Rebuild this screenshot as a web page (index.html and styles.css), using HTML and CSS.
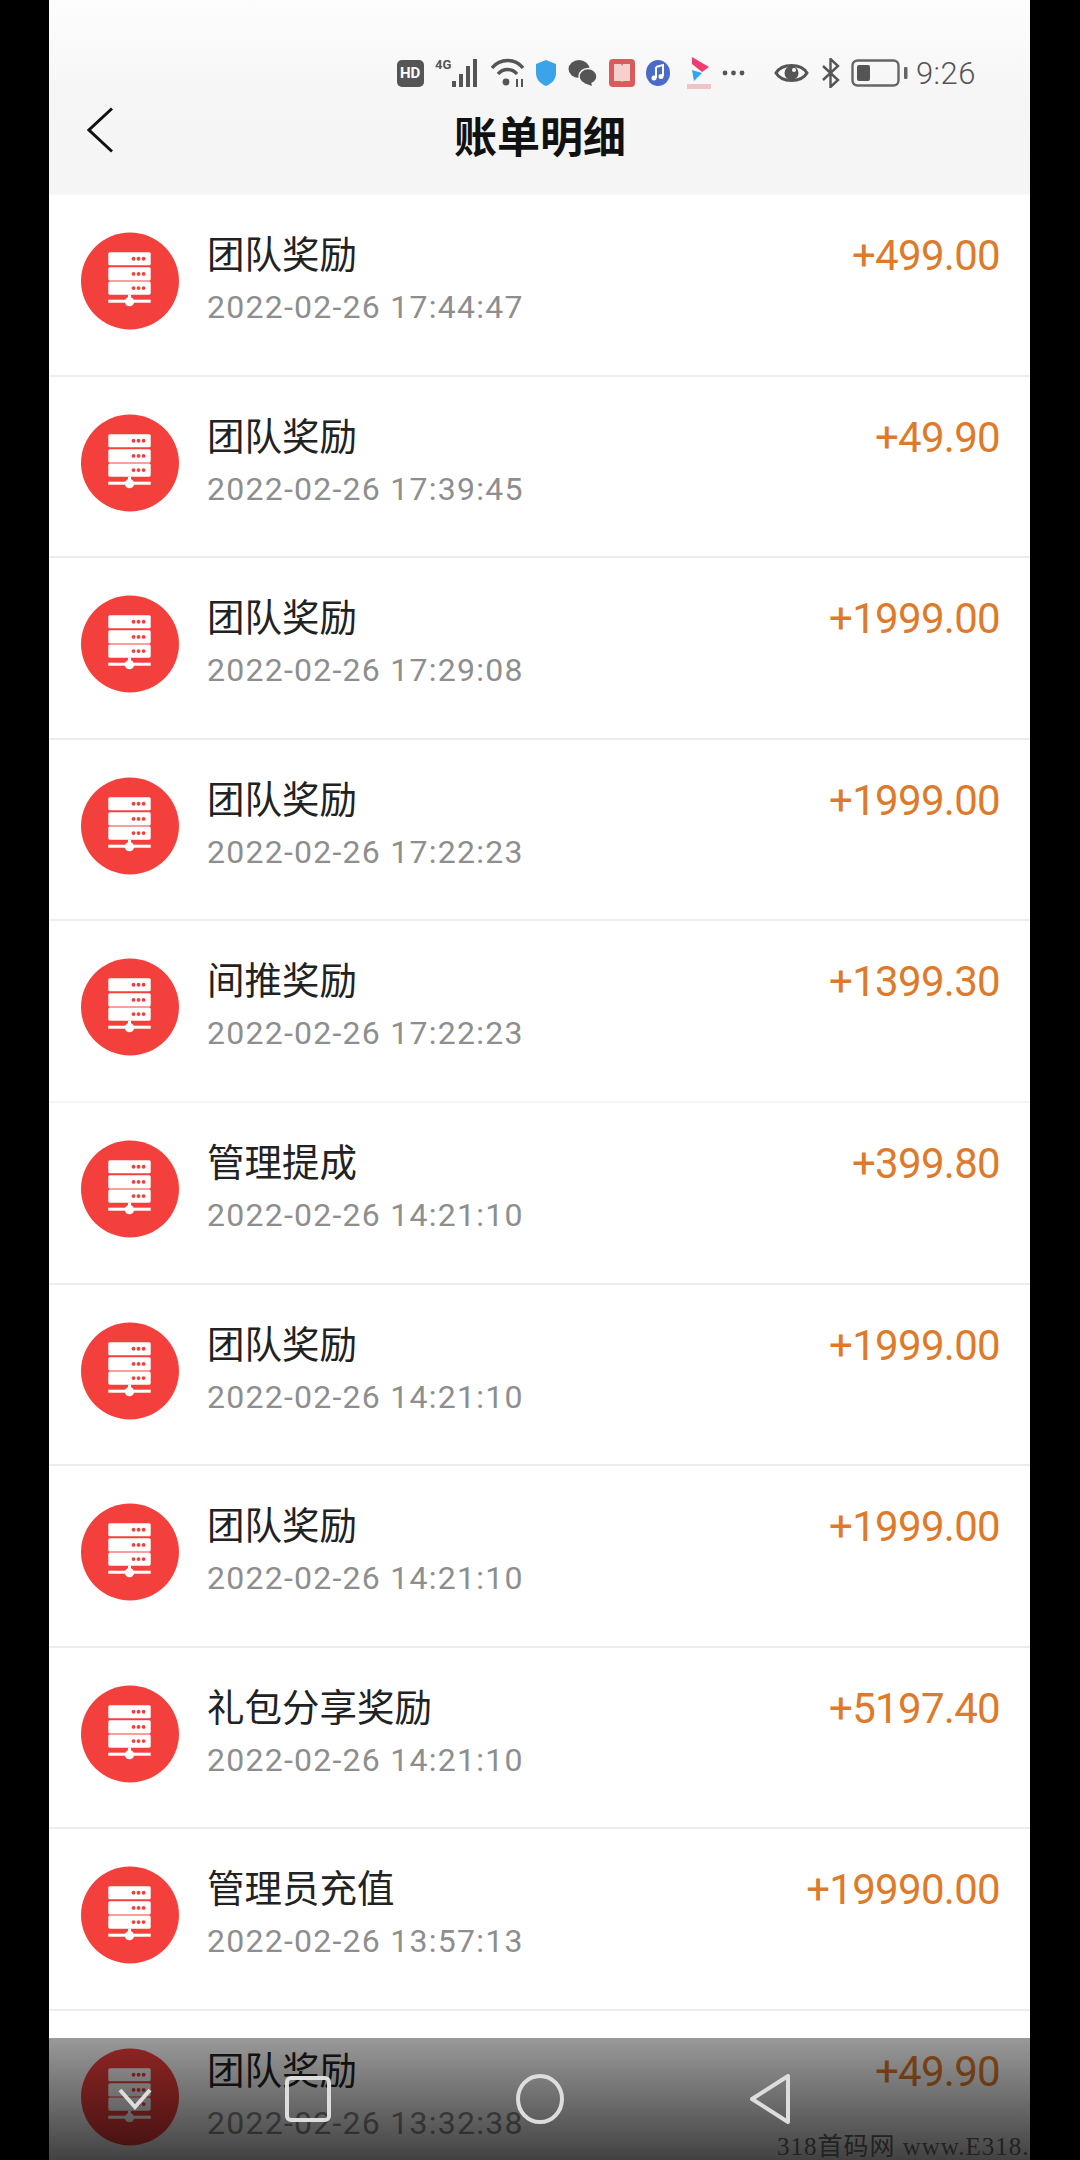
FILE: index.html
```html
<!DOCTYPE html>
<html lang="zh-CN">
<head>
    <meta charset="UTF-8">
    <meta name="viewport" content="width=device-width, initial-scale=1.0">
    <title>账单明细</title>
    <link rel="stylesheet" href="styles.css">
</head>
<body>
    <svg class="defs" width="0" height="0">
        <symbol id="server" viewBox="0 0 97 97">
            <ellipse cx="48.5" cy="48.5" rx="48.5" ry="48" fill="#f3403c"/>
            <rect x="27" y="20" width="42" height="13" rx="1.5" fill="#fff"/>
            <rect x="27" y="35" width="42" height="13" rx="1.5" fill="#fff"/>
            <rect x="27" y="49" width="42" height="13" rx="1.5" fill="#fff"/>
            <g fill="#f3403c">
                <circle cx="52" cy="26.5" r="1.9"/><circle cx="57" cy="26.5" r="1.9"/><circle cx="62" cy="26.5" r="1.9"/>
                <circle cx="52" cy="41.5" r="1.9"/><circle cx="57" cy="41.5" r="1.9"/><circle cx="62" cy="41.5" r="1.9"/>
                <circle cx="52" cy="55.5" r="1.9"/><circle cx="57" cy="55.5" r="1.9"/><circle cx="62" cy="55.5" r="1.9"/>
            </g>
            <rect x="46.5" y="62" width="3" height="6" fill="#fff"/>
            <rect x="27" y="67" width="42" height="3" fill="#fff"/>
            <circle cx="48" cy="69" r="4.6" fill="#fff"/>
        </symbol>
    </svg>

    <div class="screen">
        <header>
            <div class="status">
                <span class="hd">HD</span>
                <svg width="45" height="30" viewBox="0 0 45 30">
                    <text x="0" y="11" font-size="13" font-weight="700" fill="#555" font-family="Roboto">4G</text>
                    <g fill="#555">
                        <rect x="17" y="23" width="4" height="6"/>
                        <rect x="24" y="16" width="4" height="13"/>
                        <rect x="31" y="8" width="4" height="21"/>
                        <rect x="38" y="1" width="4" height="28"/>
                    </g>
                </svg>
                <svg width="33" height="30" viewBox="0 0 33 30" fill="none" stroke="#555" stroke-width="3.4">
                    <path d="M1 10 C9 0 24 0 32 10"/>
                    <path d="M7 16 C12 10 21 10 26 16"/>
                    <circle cx="15" cy="24" r="3.4" fill="#555" stroke="none"/>
                    <path d="M26 21v8M31 21v8" stroke-width="2"/>
                </svg>
                <svg width="22" height="28" viewBox="0 0 22 28">
                    <path d="M11 1 L21 5 V14 C21 21 16 25 11 27 C6 25 1 21 1 14 V5 Z" fill="#3aa3ea"/>
                </svg>
                <svg width="29" height="28" viewBox="0 0 29 28" fill="#555">
                    <ellipse cx="11" cy="10" rx="10.5" ry="9"/>
                    <ellipse cx="20" cy="17.5" rx="9" ry="8" stroke="#f7f7f7" stroke-width="1.5"/>
                    <path d="M16 24l7-1 1 4z"/>
                </svg>
                <svg width="26" height="28" viewBox="0 0 26 28">
                    <rect width="26" height="28" rx="4" fill="#dd5a5c"/>
                    <path d="M5 5h7l1 2 1-2h7v17h-7l-1 1-1-1h-7z" fill="#f5d0ce"/>
                </svg>
                <svg width="24" height="26" viewBox="0 0 24 26">
                    <ellipse cx="12" cy="13" rx="12" ry="13" fill="#4a6cc8"/>
                    <path d="M10 7l7-2v11M10 7v11" stroke="#fff" stroke-width="2" fill="none"/>
                    <circle cx="8" cy="18" r="2.5" fill="#fff"/><circle cx="15" cy="16.5" r="2.5" fill="#fff"/>
                </svg>
                <svg class="st-app" width="24" height="34" viewBox="0 0 24 34">
                    <path d="M5 1 L22 11 L15 16 L5 8 Z" fill="#ef3d6e"/>
                    <path d="M5 14 L15 17 L7 25 Z" fill="#2fa6ee"/>
                    <rect x="0" y="28" width="24" height="5" fill="#efc4c6"/>
                </svg>
                <svg width="23" height="6" viewBox="0 0 23 6" fill="#555">
                    <circle cx="3" cy="3" r="2.4"/><circle cx="11.5" cy="3" r="2.4"/><circle cx="20" cy="3" r="2.4"/>
                </svg>
                <svg class="st-eye" width="35" height="24" viewBox="0 0 35 24">
                    <path d="M2 12 C8 2 27 2 33 12 C27 22 8 22 2 12 Z" fill="none" stroke="#555" stroke-width="3"/>
                    <circle cx="17.5" cy="12" r="7" fill="#555"/>
                    <circle cx="20" cy="9" r="2" fill="#f7f7f7"/>
                </svg>
                <svg width="19" height="30" viewBox="0 0 19 30" fill="none" stroke="#555" stroke-width="2.4">
                    <path d="M2 8 L17 22 L9.5 29 V1 L17 8 L2 22"/>
                </svg>
                <svg width="58" height="28" viewBox="0 0 58 28">
                    <rect x="1.5" y="1.5" width="46" height="25" rx="5" fill="none" stroke="#666" stroke-width="2.4"/>
                    <rect x="6" y="6" width="13" height="16" rx="2" fill="#555"/>
                    <rect x="53" y="8" width="3.5" height="12" rx="1" fill="#666"/>
                </svg>
                <span class="time">9:26</span>
            </div>
            <div class="titlebar">
                <svg class="back" width="26" height="46" viewBox="0 0 26 46" fill="none" stroke="#111" stroke-width="3">
                    <path d="M25 1.5 L2 23 L25 44.5"/>
                </svg>
                <h1>账单明细</h1>
            </div>
        </header>

        <ul class="list">
            <li class="row">
                <svg class="icon"><use href="#server"/></svg>
                <div class="info"><div class="name">团队奖励</div><div class="date">2022-02-26 17:44:47</div></div>
                <div class="amount">+499.00</div>
            </li>
            <li class="row">
                <svg class="icon"><use href="#server"/></svg>
                <div class="info"><div class="name">团队奖励</div><div class="date">2022-02-26 17:39:45</div></div>
                <div class="amount">+49.90</div>
            </li>
            <li class="row">
                <svg class="icon"><use href="#server"/></svg>
                <div class="info"><div class="name">团队奖励</div><div class="date">2022-02-26 17:29:08</div></div>
                <div class="amount">+1999.00</div>
            </li>
            <li class="row">
                <svg class="icon"><use href="#server"/></svg>
                <div class="info"><div class="name">团队奖励</div><div class="date">2022-02-26 17:22:23</div></div>
                <div class="amount">+1999.00</div>
            </li>
            <li class="row">
                <svg class="icon"><use href="#server"/></svg>
                <div class="info"><div class="name">间推奖励</div><div class="date">2022-02-26 17:22:23</div></div>
                <div class="amount">+1399.30</div>
            </li>
            <li class="row">
                <svg class="icon"><use href="#server"/></svg>
                <div class="info"><div class="name">管理提成</div><div class="date">2022-02-26 14:21:10</div></div>
                <div class="amount">+399.80</div>
            </li>
            <li class="row">
                <svg class="icon"><use href="#server"/></svg>
                <div class="info"><div class="name">团队奖励</div><div class="date">2022-02-26 14:21:10</div></div>
                <div class="amount">+1999.00</div>
            </li>
            <li class="row">
                <svg class="icon"><use href="#server"/></svg>
                <div class="info"><div class="name">团队奖励</div><div class="date">2022-02-26 14:21:10</div></div>
                <div class="amount">+1999.00</div>
            </li>
            <li class="row">
                <svg class="icon"><use href="#server"/></svg>
                <div class="info"><div class="name">礼包分享奖励</div><div class="date">2022-02-26 14:21:10</div></div>
                <div class="amount">+5197.40</div>
            </li>
            <li class="row">
                <svg class="icon"><use href="#server"/></svg>
                <div class="info"><div class="name">管理员充值</div><div class="date">2022-02-26 13:57:13</div></div>
                <div class="amount">+19990.00</div>
            </li>
            <li class="row">
                <svg class="icon"><use href="#server"/></svg>
                <div class="info"><div class="name">团队奖励</div><div class="date">2022-02-26 13:32:38</div></div>
                <div class="amount">+49.90</div>
            </li>
        </ul>

        <!-- Barra de navegación sobre la lista -->
        <nav class="navbar">
            <svg class="nav-first" width="34" height="22" viewBox="0 0 34 22" fill="none" stroke="#ddd" stroke-width="4">
                <path d="M2 2 L17 19 L32 2"/>
            </svg>
            <svg width="46" height="46" viewBox="0 0 46 46" fill="none" stroke="#ddd" stroke-width="4">
                <rect x="2" y="2" width="42" height="42" rx="4"/>
            </svg>
            <svg width="48" height="50" viewBox="0 0 48 50" fill="none" stroke="#ddd" stroke-width="4">
                <ellipse cx="24" cy="25" rx="22" ry="23"/>
            </svg>
            <svg width="42" height="50" viewBox="0 0 42 50" fill="none" stroke="#ddd" stroke-width="4" stroke-linejoin="round">
                <path d="M39 2 V48 L3 25 Z"/>
            </svg>
        </nav>
        <div class="watermark">318首码网 www.E318.</div>
    </div>
</body>
</html>
```

FILE: styles.css
```css
/* Estilos generales */
* {
    box-sizing: border-box;
}

body {
    margin: 0;
    background-color: #000;
    font-family: "Roboto", "Noto Sans CJK SC", sans-serif;
}

.defs {
    display: block;
    height: 0;
}

.screen {
    position: relative;
    width: 981px;
    height: 2160px;
    margin-left: 49px;
    overflow: hidden;
    background-color: #fff;
}

/* Cabecera */
header {
    height: 195px;
    background: linear-gradient(#fdfdfd, #f6f6f6 90px, #f5f5f5);
    border-bottom: 2px solid #f8f8f8;
}

.status {
    display: flex;
    align-items: center;
    justify-content: flex-end;
    gap: 11.2px;
    height: 40px;
    padding-right: 54px;
    position: relative;
    top: 53px;
}

.hd {
    width: 27px;
    height: 27px;
    border-radius: 5px;
    background-color: #555;
    color: #fff;
    font-size: 15px;
    font-weight: 700;
    line-height: 27px;
    text-align: center;
}

.st-app {
    margin-left: 6px;
}

.st-eye {
    margin-left: 18px;
}

.time {
    margin-left: -4px;
    color: #555;
    font-size: 31px;
    font-weight: 300;
    letter-spacing: 0.5px;
}

.titlebar {
    display: flex;
    align-items: center;
    height: 60px;
    margin-top: 68px;
    padding-left: 38px;
}

.back {
    flex: none;
    margin-top: -17px;
}

h1 {
    margin: 0 0 0 341px;
    color: #111;
    font-size: 43px;
    font-weight: 700;
    line-height: 60px;
}

/* Lista de movimientos */
.list {
    margin: 0;
    padding: 0;
    list-style: none;
}

.row {
    display: flex;
    align-items: flex-start;
    height: 181.6px;
    padding: 37px 30px 0 32px;
    border-bottom: 2px solid #ededed;
}

.row:nth-child(5) {
    border-bottom-color: #f4f4f4;
}

.icon {
    flex: none;
    width: 98px;
    height: 98px;
}

.info {
    margin-left: 28px;
    margin-top: -4px;
}

.name {
    color: #222;
    font-size: 37.5px;
    line-height: 54px;
}

.date {
    margin-top: 2px;
    color: #8e8e8e;
    font-size: 32px;
    letter-spacing: 1.25px;
    line-height: 46px;
}

.amount {
    margin-left: auto;
    margin-top: -3px;
    color: #de7a2b;
    font-size: 42px;
    letter-spacing: -0.7px;
    line-height: 54px;
}

/* Barra inferior */
.navbar {
    position: absolute;
    left: 0;
    right: 0;
    bottom: 0;
    height: 122px;
    display: flex;
    align-items: center;
    padding-left: 69px;
    gap: 185px;
    background: linear-gradient(rgba(0, 0, 0, 0.4), rgba(0, 0, 0, 0.74));
}

.nav-first {
    margin-right: -52px;
}

.watermark {
    position: absolute;
    left: 728px;
    bottom: -2px;
    width: 253px;
    overflow: hidden;
    color: #222;
    font-family: "Liberation Serif", "Noto Sans CJK SC", serif;
    font-size: 25px;
    letter-spacing: 1px;
    white-space: nowrap;
}
```
